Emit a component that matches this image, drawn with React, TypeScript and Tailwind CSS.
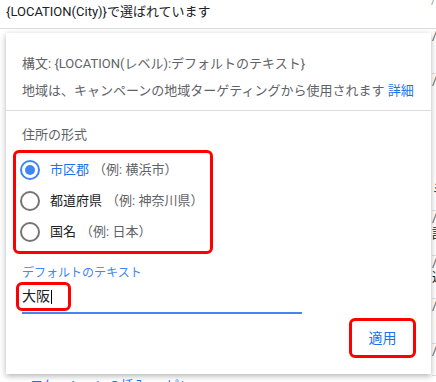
import { useState } from "react";

const font = "font-['Roboto','Noto_Sans_CJK_JP',sans-serif]";

type Option = { id: string; label: string; example: string };

const options: Option[] = [
  { id: "city", label: "市区郡", example: "（例: 横浜市）" },
  { id: "pref", label: "都道府県", example: "（例: 神奈川県）" },
  { id: "country", label: "国名", example: "（例: 日本）" },
];

function Radio({ checked }: { checked: boolean }) {
  return (
    <span
      className={`flex h-[20px] w-[20px] shrink-0 items-center justify-center rounded-full border-2 ${
        checked ? "border-[#4285f4]" : "border-[#757575]"
      }`}
    >
      {checked && <span className="h-[10px] w-[10px] rounded-full bg-[#4285f4]" />}
    </span>
  );
}

function BackgroundRows() {
  const rows = [
    { h: 45, glyph: "" },
    { h: 137, glyph: "ミ" },
    { h: 45, glyph: "詳" },
    { h: 43, glyph: "週" },
    { h: 45, glyph: "ト" },
    { h: 32, glyph: "" },
  ];
  return (
    <div className="ml-[432px] flex flex-col">
      {rows.map((r, i) => (
        <div
          key={i}
          className="flex flex-col border-b border-[#e0e0e0] text-[13px] leading-[14px] text-[#5f6368]"
          style={{ height: r.h }}
        >
          <span>/</span>
          {r.glyph && <span className="mt-auto mb-[14px] text-[#202124]">{r.glyph}</span>}
        </div>
      ))}
    </div>
  );
}

export default function App() {
  const [selected, setSelected] = useState("city");

  return (
    <div className={`relative h-[382px] w-[436px] overflow-hidden bg-white ${font}`}>
      <div className="flex h-[29px] items-start justify-between border-b border-[#dadce0] pl-[6px]">
        <span className="mt-[2px] text-[13px] leading-[20px] text-[#202124]">
          {"{LOCATION(City)}"}で選ばれています
        </span>
        <span className="-mt-[9px] text-[12px] text-[#9e9e9e]">ー/</span>
      </div>
      <BackgroundRows />
      <div className="mt-[3px] pl-[30px] text-[13px] leading-[14px] text-[#1a73e8]">
        ロケーションの挿入 ー ピン
      </div>

      <div className="absolute left-[6px] top-[33px] flex h-[341px] w-[425px] flex-col bg-white shadow-[0_2px_6px_rgba(0,0,0,0.3)]">
        <div className="border-b border-[#dadce0] px-[16px] pb-[9px] pt-[21px] text-[13px] leading-[20px] text-[#5f6368]">
          <p>構文: {"{LOCATION(レベル):デフォルトのテキスト}"}</p>
          <p className="mt-[7px]">
            地域は、キャンペーンの地域ターゲティングから使用されます{" "}
            <span className="text-[#1a73e8]">詳細</span>
          </p>
        </div>

        <div className="px-[7px] pt-[14px]">
          <p className="pl-[9px] text-[13px] leading-[20px] text-[#5f6368]">住所の形式</p>
          <div className="mt-[5px] w-[200px] rounded-[6px] border-[3px] border-[#ff0000] pb-[4px] pt-[1px]">
            {options.map((o) => (
              <button
                key={o.id}
                onClick={() => setSelected(o.id)}
                className="flex h-[31px] items-center pl-[4px] text-[13px]"
              >
                <Radio checked={selected === o.id} />
                <span
                  className={`ml-[10px] ${
                    selected === o.id ? "text-[#1a73e8]" : "text-[#202124]"
                  }`}
                >
                  {o.label}
                </span>
                <span className="ml-[4px] text-[#5f6368]">{o.example}</span>
              </button>
            ))}
          </div>
        </div>

        <div className="pl-[10px] pt-[11px]">
          <p className="pl-[6px] text-[12px] leading-[16px] text-[#4285f4]">
            デフォルトのテキスト
          </p>
          <div className="mt-[1px] flex h-[29px] w-[55px] items-center rounded-[6px] border-[3px] border-[#ff0000] pl-[3px] text-[14px] text-[#202124]">
            大阪
            <span className="ml-[1px] h-[14px] w-px bg-black" />
          </div>
          <div className="ml-[6px] mt-[1px] h-[2px] w-[280px] bg-[#4285f4]" />
        </div>

        <div className="mt-auto flex justify-end pb-[16px] pr-[15px]">
          <button className="flex h-[40px] w-[67px] items-center justify-center rounded-[6px] border-[3px] border-[#ff0000] text-[14px] text-[#1a73e8]">
            適用
          </button>
        </div>
      </div>
    </div>
  );
}
